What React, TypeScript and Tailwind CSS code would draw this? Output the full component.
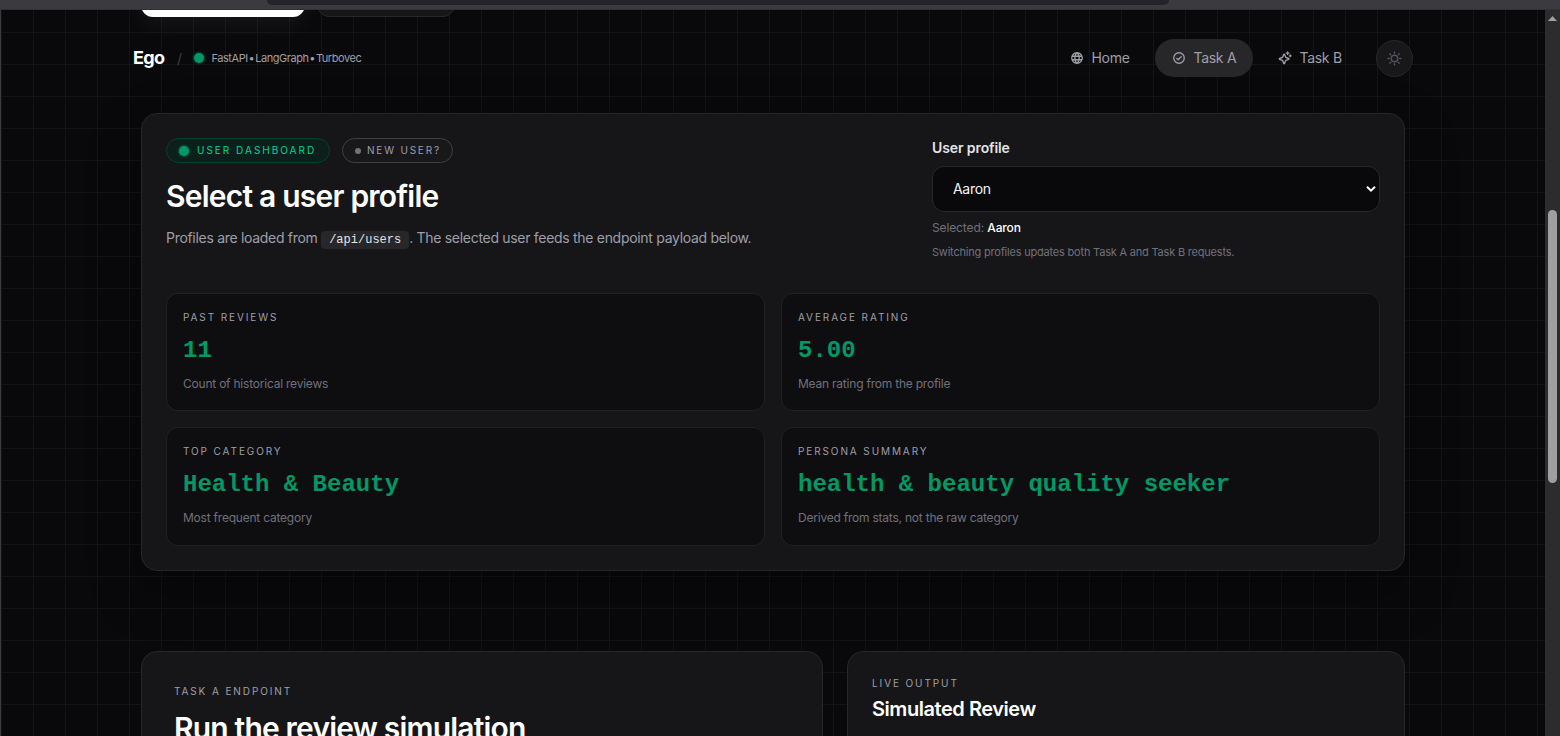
import { useState } from "react";
import { clsx } from "clsx";
import { PiCheckCircleBold, PiGlobeBold, PiSparkleBold, PiSun } from "react-icons/pi";

const NAV_LINKS = [
    { name: "Home", icon: PiGlobeBold, className: "w-[93px] pl-4" },
    { name: "Task A", icon: PiCheckCircleBold, className: "w-[98px] pl-[17px]" },
    { name: "Task B", icon: PiSparkleBold, className: "w-[98px] pl-[17px]" },
];

const STATS = [
    { label: "Past reviews", value: "11", note: "Count of historical reviews" },
    { label: "Average rating", value: "5.00", note: "Mean rating from the profile" },
    { label: "Top category", value: "Health & Beauty", note: "Most frequent category" },
    { label: "Persona summary", value: "health & beauty quality seeker", note: "Derived from stats, not the raw category" },
];

function StatusDot() {
    return <span className="size-[10px] shrink-0 rounded-full bg-[#009966] shadow-[0_0_2px_1px_rgba(0,153,102,0.4)]" />;
}

function Eyebrow({ children }: { children: string }) {
    return <p className="text-[10px] leading-[15px] tracking-[1.9px] uppercase text-[#9f9fa9]">{children}</p>;
}

function Navbar() {
    return (
        <header className="flex h-[38px] items-center justify-between">
            <div className="flex items-center">
                <span className="w-[44px] pb-px text-[18px] font-bold tracking-[-0.7px] text-white">Ego</span>
                <span className="w-[17px] text-[14px] text-[#3f3f46]">/</span>
                <StatusDot />
                <span className="ml-[7.5px] text-[11px] tracking-[-0.45px] text-[#9f9fa9] [word-spacing:-1.8px]">FastAPI • LangGraph • Turbovec</span>
            </div>
            <div className="flex items-center">
                <nav className="flex items-center gap-2">
                    {NAV_LINKS.map(({ name, icon: Icon, className }) => (
                        <a
                            key={name}
                            className={clsx(
                                "flex h-[38px] items-center gap-[7.5px] rounded-full text-[14px] tracking-[-0.3px] whitespace-nowrap text-[#9f9fa9]",
                                className,
                                name === "Task A" && "bg-[#27272a]"
                            )}
                        >
                            <Icon className="size-[14px]" />
                            <span className="pb-px">{name}</span>
                        </a>
                    ))}
                </nav>
                <button className="ml-[17px] flex size-[37px] items-center justify-center rounded-full border border-[#27272a] bg-[#18181b] text-[#5c5c66]">
                    <PiSun className="size-[15px] stroke-[6]" />
                </button>
            </div>
        </header>
    );
}

function StatCard({ label, value, note }: (typeof STATS)[number]) {
    return (
        <div className="h-[118.25px] rounded-xl border border-[#212124] bg-[#0e0e10] px-4 pt-4">
            <Eyebrow>{label}</Eyebrow>
            <p className="mt-[10px] font-['Liberation_Mono',monospace] text-[24px] leading-8 font-bold text-[#009966]">{value}</p>
            <p className="mt-[9px] text-[12px] leading-4 tracking-[-0.22px] text-[#71717b]">{note}</p>
        </div>
    );
}

function Dashboard() {
    const [user, setUser] = useState("Aaron");

    return (
        <section className="h-[458px] rounded-2xl border border-[#27272a] bg-[#161618] p-6 shadow-[0_20px_50px_rgba(0,0,0,0.35)]">
            <div className="flex h-[155px] justify-between">
                <div>
                    <div className="flex gap-3">
                        <span className="flex h-[25px] w-[164px] items-center gap-2 rounded-full border border-[#07402f] bg-[#0d1f1b] pl-3 text-[10px] tracking-[2px] whitespace-nowrap text-[#00d492]">
                            <StatusDot />
                            USER DASHBOARD
                        </span>
                        <span className="flex h-[25px] w-[111px] items-center gap-[6px] rounded-full border border-[#3f3f46] bg-[#18181b] pl-3 text-[10px] tracking-[1.8px] whitespace-nowrap text-[#9f9fa9]">
                            <i className="size-[6px] rounded-full bg-[#71717b]" />
                            NEW USER?
                        </span>
                    </div>
                    <h1 className="mt-[15px] text-[30px] leading-9 font-semibold tracking-[-0.78px] text-white">Select a user profile</h1>
                    <p className="mt-3 text-[14px] leading-6 tracking-[-0.3px] text-[#9f9fa9]">
                        Profiles are loaded from{" "}
                        <code className="rounded bg-[#27272a] px-2 py-[2px] font-['Liberation_Mono',monospace] text-[12px] tracking-normal text-[#e4e4e7]">/api/users</code>
                        . The selected user feeds the endpoint payload below.
                    </p>
                </div>
                <div className="w-[448px]">
                    <label className="block text-[14px] leading-5 font-semibold tracking-[-0.1px] text-[#e4e4e7]">User profile</label>
                    <div className="relative mt-2 h-[46px]">
                        <select
                            value={user}
                            onChange={(e) => setUser(e.target.value)}
                            className="h-full w-full appearance-none rounded-xl border border-[#27272a] bg-[#09090b] pb-px pl-5 text-[14px] tracking-[-0.3px] text-[#f4f4f5]"
                        >
                            <option>Aaron</option>
                        </select>
                        <svg viewBox="0 0 10 8" className="pointer-events-none absolute top-[19px] right-[4px] h-2 w-[10px]" fill="none" stroke="white" strokeWidth="2">
                            <path d="m1 1.7 4 4 4-4" />
                        </svg>
                    </div>
                    <p className="mt-2 text-[12px] leading-4 tracking-[-0.12px] text-[#71717b]">
                        Selected: <span className="font-medium text-white">{user}</span>
                    </p>
                    <p className="mt-2 text-[11px] leading-[17px] tracking-[-0.2px] text-[#71717b]">Switching profiles updates both Task A and Task B requests.</p>
                </div>
            </div>
            <div className="grid grid-cols-2 gap-4">
                {STATS.map((stat) => (
                    <StatCard key={stat.label} {...stat} />
                ))}
            </div>
        </section>
    );
}

export default function App() {
    return (
        <div className="flex h-[736px] w-[1560px] flex-col overflow-hidden bg-[#09090b] font-[Inter,sans-serif]">
            {/* browser chrome edge */}
            <div className="h-[10px] shrink-0 border-b border-[#303035] bg-[#3b3a3f]">
                <div className="ml-[267px] h-[5px] w-[902px] rounded-b-lg bg-[#242329]" />
            </div>
            <div className="flex min-h-0 flex-1">
                <div className="w-px shrink-0 bg-[#3b3b3e]" />
                <main className="h-[726px] w-[1544px] overflow-hidden bg-[linear-gradient(to_right,#141416_1px,transparent_1px),linear-gradient(to_bottom,#141416_1px,transparent_1px)] bg-size-[32px_32px] bg-position-[0_22px]">
                    {/* bottoms of the hero buttons, scrolled under the top edge */}
                    <div className="ml-[140px] flex h-[7px] items-end gap-3">
                        <div className="-mt-8 h-10 w-[164px] rounded-xl bg-white shadow-[0_8px_24px_rgba(255,255,255,0.06)]" />
                        <div className="-mt-8 h-10 w-[138px] rounded-xl border border-[#27272a] bg-[#161618]" />
                    </div>
                    <div className="mt-[22px] ml-[132px] w-[1280px]">
                        <Navbar />
                    </div>
                    <div className="mt-9 ml-[140px] w-[1264px]">
                        <Dashboard />
                        <div className="mt-20 flex gap-6">
                            <section className="h-[300px] w-[682px] rounded-2xl border border-[#27272a] bg-[#161618] px-8 pt-8">
                                <Eyebrow>Task A endpoint</Eyebrow>
                                <h2 className="mt-[11px] text-[30px] leading-9 font-semibold tracking-[-0.82px] text-white">Run the review simulation</h2>
                            </section>
                            <section className="h-[300px] w-[558px] rounded-2xl border border-[#27272a] bg-[#161618] px-6 pt-6">
                                <Eyebrow>Live output</Eyebrow>
                                <h2 className="mt-1 text-[20px] leading-7 font-semibold tracking-[-0.45px] text-white">Simulated Review</h2>
                            </section>
                        </div>
                    </div>
                </main>
                {/* scrollbar */}
                <aside className="flex w-[15px] shrink-0 flex-col items-center bg-[#2c2c2c]">
                    <svg viewBox="0 0 9 5" className="mt-[6px] h-[5px] w-[9px]" fill="#a0a0a0">
                        <path d="M4.5 0 9 5H0Z" />
                    </svg>
                    <div className="mt-[189px] h-[273px] w-[9px] rounded-full bg-[#9f9f9f]" />
                </aside>
            </div>
        </div>
    );
}
